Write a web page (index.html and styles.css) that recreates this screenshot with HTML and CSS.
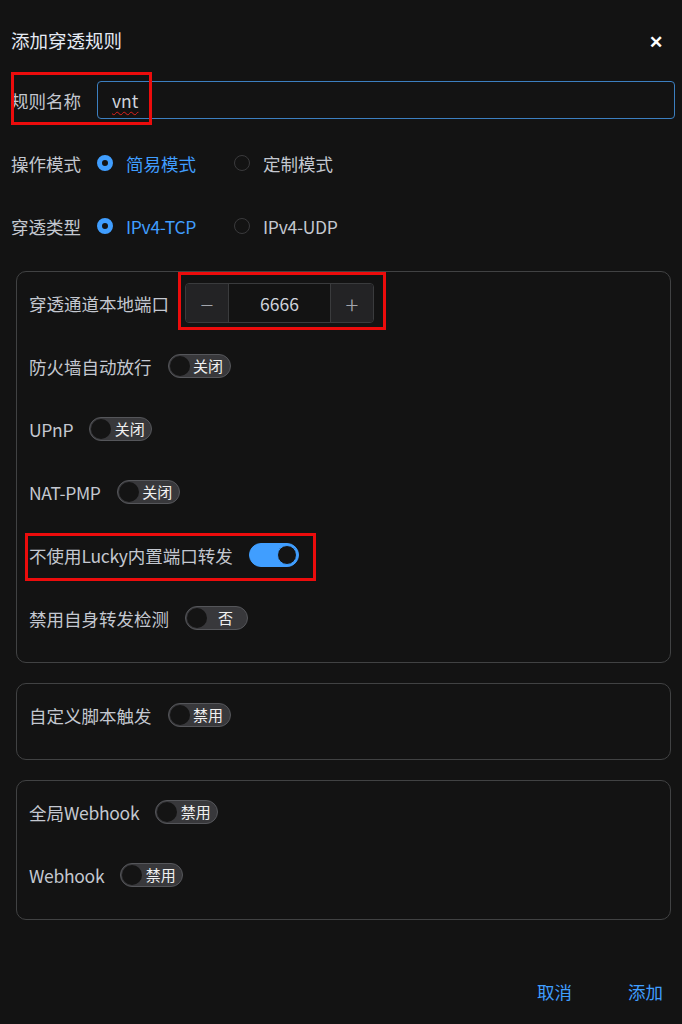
FILE: index.html
```html
<!DOCTYPE html>
<html lang="zh-CN">
  <head>
    <meta charset="UTF-8" />
    <meta name="viewport" content="width=device-width, initial-scale=1.0" />
    <title>添加穿透规则</title>
    <link rel="stylesheet" href="styles.css">
  </head>
  <body>
    <div class="dialog">
      <header class="dialog-header">
        <h2>添加穿透规则</h2>
        <span class="close">✕</span>
      </header>

      <div class="form">
        <div class="row">
          <label class="label">规则名称</label>
          <div class="text-input"><span class="typo">vnt</span></div>
        </div>

        <div class="row">
          <label class="label">操作模式</label>
          <div class="radio checked"><span class="dot"></span>简易模式</div>
          <div class="radio"><span class="dot"></span>定制模式</div>
        </div>

        <div class="row last">
          <label class="label">穿透类型</label>
          <div class="radio checked"><span class="dot"></span><span class="latin">IPv4-TCP</span></div>
          <div class="radio"><span class="dot"></span><span class="latin">IPv4-UDP</span></div>
        </div>

        <div class="group">
          <div class="row">
            <label class="label">穿透通道本地端口</label>
            <div class="number">
              <span class="step">−</span>
              <span class="value">6666</span>
              <span class="step">+</span>
            </div>
          </div>
          <div class="row">
            <label class="label">防火墙自动放行</label>
            <div class="switch"><span class="knob"></span><span class="txt">关闭</span></div>
          </div>
          <div class="row">
            <label class="label latin">UPnP</label>
            <div class="switch"><span class="knob"></span><span class="txt">关闭</span></div>
          </div>
          <div class="row">
            <label class="label latin">NAT-PMP</label>
            <div class="switch"><span class="knob"></span><span class="txt">关闭</span></div>
          </div>
          <div class="row">
            <label class="label">不使用<span class="latin">Lucky</span>内置端口转发</label>
            <div class="switch on"><span class="knob"></span></div>
          </div>
          <div class="row">
            <label class="label">禁用自身转发检测</label>
            <div class="switch"><span class="knob"></span><span class="txt">否</span></div>
          </div>
        </div>

        <div class="group">
          <div class="row">
            <label class="label">自定义脚本触发</label>
            <div class="switch"><span class="knob"></span><span class="txt">禁用</span></div>
          </div>
        </div>

        <div class="group">
          <div class="row">
            <label class="label">全局<span class="latin">Webhook</span></label>
            <div class="switch"><span class="knob"></span><span class="txt">禁用</span></div>
          </div>
          <div class="row">
            <label class="label latin">Webhook</label>
            <div class="switch"><span class="knob"></span><span class="txt">禁用</span></div>
          </div>
        </div>
      </div>

      <footer class="dialog-footer">
        <button class="link">取消</button>
        <button class="link">添加</button>
      </footer>

      <!-- annotation frames -->
      <div class="mark mark-name"></div>
      <div class="mark mark-port"></div>
      <div class="mark mark-lucky"></div>
    </div>
  </body>
</html>
```

FILE: styles.css
```css
* {
  box-sizing: border-box;
}

html {
  font-family: "Noto Sans CJK SC", "Noto Sans", sans-serif;
}

body {
  margin: 0;
  background-color: #131313;
  color: #cfd3dc;
}

.dialog {
  position: relative;
  width: 682px;
  height: 1024px;
  padding: 0 7px 0 11px;
}

.dialog-header {
  display: flex;
  align-items: center;
  justify-content: space-between;
  height: 80px;
  padding-right: 12px;
}

.dialog-header h2 {
  margin: 0;
  font-size: 18.5px;
  font-weight: 400;
  color: #e5eaf3;
}

.close {
  font-size: 17px;
  color: #fff;
  font-weight: 700;
}

.row {
  display: flex;
  align-items: center;
  height: 40px;
  margin-bottom: 23px;
}

.row.last {
  margin-bottom: 25px;
}

.label {
  font-size: 17.5px;
  color: #c4c8d0;
  margin-right: 16px;
  white-space: nowrap;
}

/* latin parts are a bit narrower in the original */
.latin {
  letter-spacing: -0.3px;
}

.text-input {
  flex: 1;
  height: 38px;
  border: 1px solid #3c7fc0;
  border-radius: 4px;
  padding: 0 14px;
  display: flex;
  align-items: center;
  font-size: 17.5px;
  color: #cfd3dc;
}

.typo {
  text-decoration: underline wavy #e0201c;
  text-decoration-thickness: 1px;
  text-underline-offset: 3px;
}

.radio {
  display: flex;
  align-items: center;
  font-size: 17.5px;
  color: #c4c8d0;
  margin-right: 38px;
}

.radio .dot {
  width: 16px;
  height: 16px;
  border-radius: 50%;
  border: 1px solid #3a3a3c;
  margin-right: 13px;
}

.radio.checked {
  color: #409eff;
}

.radio.checked .dot {
  border: 5px solid #409eff;
  background-color: #141414;
}

.group {
  border: 1px solid #414243;
  border-radius: 10px;
  margin: 0 4px 20px 5px;
  padding: 11px 13px 1px 12px;
}

.number {
  display: flex;
  width: 189px;
  height: 40px;
  border: 1px solid #3a3b3d;
  border-radius: 4px;
  overflow: hidden;
}

.number .step {
  width: 42px;
  display: flex;
  align-items: center;
  justify-content: center;
  background-color: #232325;
  color: #a3a6ad;
  font-size: 24px;
  font-weight: 300;
}

.number .value {
  flex: 1;
  display: flex;
  align-items: center;
  justify-content: center;
  background-color: #131313;
  border-left: 1px solid #3a3b3d;
  border-right: 1px solid #3a3b3d;
  font-size: 17.5px;
  color: #cfd3dc;
}

.switch {
  display: flex;
  align-items: center;
  width: 63px;
  height: 24px;
  border: 1px solid #55565a;
  border-radius: 12px;
  background-color: #38383b;
  padding: 1px;
}

.switch .knob {
  width: 20px;
  height: 20px;
  border-radius: 50%;
  background-color: #141414;
}

.switch .txt {
  flex: 1;
  text-align: center;
  font-size: 15px;
  color: #f0f0f0;
  line-height: 20px;
  padding-right: 2px;
}

.switch.on {
  width: 50px;
  background-color: #409eff;
  border-color: #409eff;
  justify-content: flex-end;
}

.switch.on .knob {
  border: 1px solid #409eff;
}

.dialog-footer {
  display: flex;
  justify-content: flex-end;
  gap: 56px;
  padding: 39px 12px 0 0;
}

.link {
  background: none;
  border: none;
  padding: 0;
  font-family: inherit;
  font-size: 17.5px;
  color: #409eff;
}

.mark {
  position: absolute;
  border: 3px solid #ec0c0c;
}

.mark-name {
  left: 11px;
  top: 72px;
  width: 141px;
  height: 53px;
}

.mark-port {
  left: 178px;
  top: 272px;
  width: 208px;
  height: 58px;
}

.mark-lucky {
  left: 25px;
  top: 533px;
  width: 291px;
  height: 48px;
}
```
